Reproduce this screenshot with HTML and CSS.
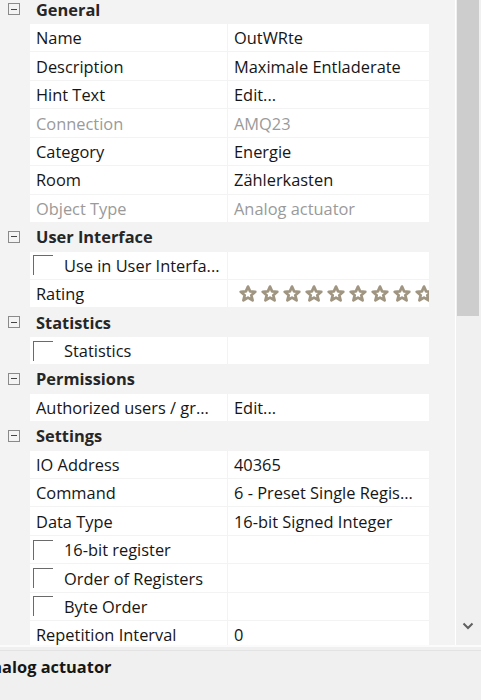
FILE: index.html
```html
<!DOCTYPE html>
<html>
<head>
<meta charset="utf-8">
<link rel="stylesheet" href="styles.css">
</head>
<body>
<div class="grid">
  <div class="list">
    <div class="rows">
      <div class="row cat"><span class="exp"></span><span class="cat-label">General</span></div>
      <div class="row"><span class="gut"></span><span class="name">Name</span><span class="val">OutWRte</span></div>
      <div class="row"><span class="gut"></span><span class="name">Description</span><span class="val">Maximale Entladerate</span></div>
      <div class="row"><span class="gut"></span><span class="name">Hint Text</span><span class="val">Edit...</span></div>
      <div class="row dim"><span class="gut"></span><span class="name">Connection</span><span class="val">AMQ23</span></div>
      <div class="row"><span class="gut"></span><span class="name">Category</span><span class="val">Energie</span></div>
      <div class="row"><span class="gut"></span><span class="name">Room</span><span class="val">Zählerkasten</span></div>
      <div class="row dim"><span class="gut"></span><span class="name">Object Type</span><span class="val">Analog actuator</span></div>
      <div class="row cat"><span class="exp"></span><span class="cat-label">User Interface</span></div>
      <div class="row"><span class="gut"></span><span class="name chk"><span class="box"></span>Use in User Interfa...</span><span class="val"></span></div>
      <div class="row"><span class="gut"></span><span class="name">Rating</span><span class="val stars">
        <svg width="200" height="18" viewBox="0 0 200 18">
          <defs>
            <symbol id="st" viewBox="0 0 18 18"><path d="M9 1.6 L11.1 6.4 L16.3 6.8 L12.3 10.2 L13.6 15.4 L9 12.6 L4.4 15.4 L5.7 10.2 L1.7 6.8 L6.9 6.4 Z" fill="#fff" stroke="#a09580" stroke-width="2.7" stroke-linejoin="round"/></symbol>
          </defs>
          <use href="#st" x="2" y="0" width="18" height="18"/>
          <use href="#st" x="24" y="0" width="18" height="18"/>
          <use href="#st" x="46" y="0" width="18" height="18"/>
          <use href="#st" x="68" y="0" width="18" height="18"/>
          <use href="#st" x="90" y="0" width="18" height="18"/>
          <use href="#st" x="112" y="0" width="18" height="18"/>
          <use href="#st" x="134" y="0" width="18" height="18"/>
          <use href="#st" x="156" y="0" width="18" height="18"/>
          <use href="#st" x="178" y="0" width="18" height="18"/>
        </svg>
      </span></div>
      <div class="row cat"><span class="exp"></span><span class="cat-label">Statistics</span></div>
      <div class="row"><span class="gut"></span><span class="name chk"><span class="box"></span>Statistics</span><span class="val"></span></div>
      <div class="row cat"><span class="exp"></span><span class="cat-label">Permissions</span></div>
      <div class="row"><span class="gut"></span><span class="name">Authorized users / gr...</span><span class="val">Edit...</span></div>
      <div class="row cat"><span class="exp"></span><span class="cat-label">Settings</span></div>
      <div class="row"><span class="gut"></span><span class="name">IO Address</span><span class="val">40365</span></div>
      <div class="row"><span class="gut"></span><span class="name">Command</span><span class="val">6 - Preset Single Regis...</span></div>
      <div class="row"><span class="gut"></span><span class="name">Data Type</span><span class="val">16-bit Signed Integer</span></div>
      <div class="row"><span class="gut"></span><span class="name chk"><span class="box"></span>16-bit register</span><span class="val"></span></div>
      <div class="row"><span class="gut"></span><span class="name chk"><span class="box"></span>Order of Registers</span><span class="val"></span></div>
      <div class="row"><span class="gut"></span><span class="name chk"><span class="box"></span>Byte Order</span><span class="val"></span></div>
      <div class="row"><span class="gut"></span><span class="name">Repetition Interval</span><span class="val">0</span></div>
      <div class="row"><span class="gut"></span><span class="name">Scaling</span><span class="val"></span></div>
    </div>
  </div>
  <div class="scrollbar">
    <div class="thumb"></div>
    <div class="track"></div>
    <div class="arrow">
      <svg width="12" height="8" viewBox="0 0 12 8"><path d="M1.5 1.5 L6 6 L10.5 1.5" fill="none" stroke="#606060" stroke-width="2"/></svg>
    </div>
  </div>
</div>
<div class="help">
  <div class="help-title">Analog actuator</div>
</div>
</body>
</html>
```

FILE: styles.css
```css
html, body {
  margin: 0;
  padding: 0;
}
body {
  width: 481px;
  height: 700px;
  overflow: hidden;
  background: #f0f0f0;
  font-family: "Open Sans", "Noto Sans", sans-serif;
  font-size: 16.4px;
  color: #161616;
}
.grid {
  display: flex;
  height: 645px;
  background: #f3f3f3;
}
.list {
  width: 455px;
  overflow: hidden;
}
.rows {
  margin-top: -4.45px;
  display: flex;
  flex-direction: column;
}
.row {
  display: grid;
  grid-template-columns: 29px 197px 201px;
  column-gap: 1px;
  height: 28.45px;
  padding-bottom: 1px;
  box-sizing: border-box;
  flex: none;
}
.name, .val {
  background: #fff;
  display: flex;
  align-items: center;
  white-space: nowrap;
  overflow: hidden;
}
.name {
  padding-left: 6px;
}
.val {
  padding-left: 6px;
}
.dim .name, .dim .val {
  color: #9a9a9a;
}
.cat {
  align-items: center;
}
.cat-label {
  font-weight: bold;
  padding-left: 6px;
  grid-column: 2 / 4;
  color: #262626;
}
.exp {
  width: 12px;
  height: 12px;
  margin-left: 8px;
  border: 1px solid #8a8a8a;
  box-sizing: border-box;
  position: relative;
}
.exp::after {
  content: "";
  position: absolute;
  left: 2px;
  right: 2px;
  top: 4.5px;
  height: 1px;
  background: #444;
}
.chk {
  padding-left: 3px;
}
.box {
  width: 20px;
  height: 20px;
  box-sizing: border-box;
  border-top: 1.5px solid #6a6a6a;
  border-left: 1.5px solid #6a6a6a;
  margin-right: 11px;
  flex: none;
}
.stars {
  padding-left: 9px;
}
.stars svg {
  display: block;
  flex: none;
}
.scrollbar {
  width: 26px;
  border-left: 1px solid #fff;
  box-sizing: border-box;
  display: flex;
  flex-direction: column;
  padding-left: 1px;
  padding-right: 2px;
  background: #f0f0f0;
}
.thumb {
  height: 316px;
  background: #cdcdcd;
}
.track {
  flex: 1;
}
.arrow {
  height: 26px;
  display: flex;
  justify-content: center;
  align-items: center;
  padding-bottom: 6px;
}
.help {
  height: 55px;
  border-top: 2px solid #fbfbfb;
  box-sizing: border-box;
  background: #f0f0f0;
  overflow: hidden;
}
.help-title {
  margin-top: 3px;
  border-top: 1px solid #e3e3e3;
  margin-left: -20px;
  font-weight: bold;
  padding-top: 4px;
  white-space: nowrap;
}
```
